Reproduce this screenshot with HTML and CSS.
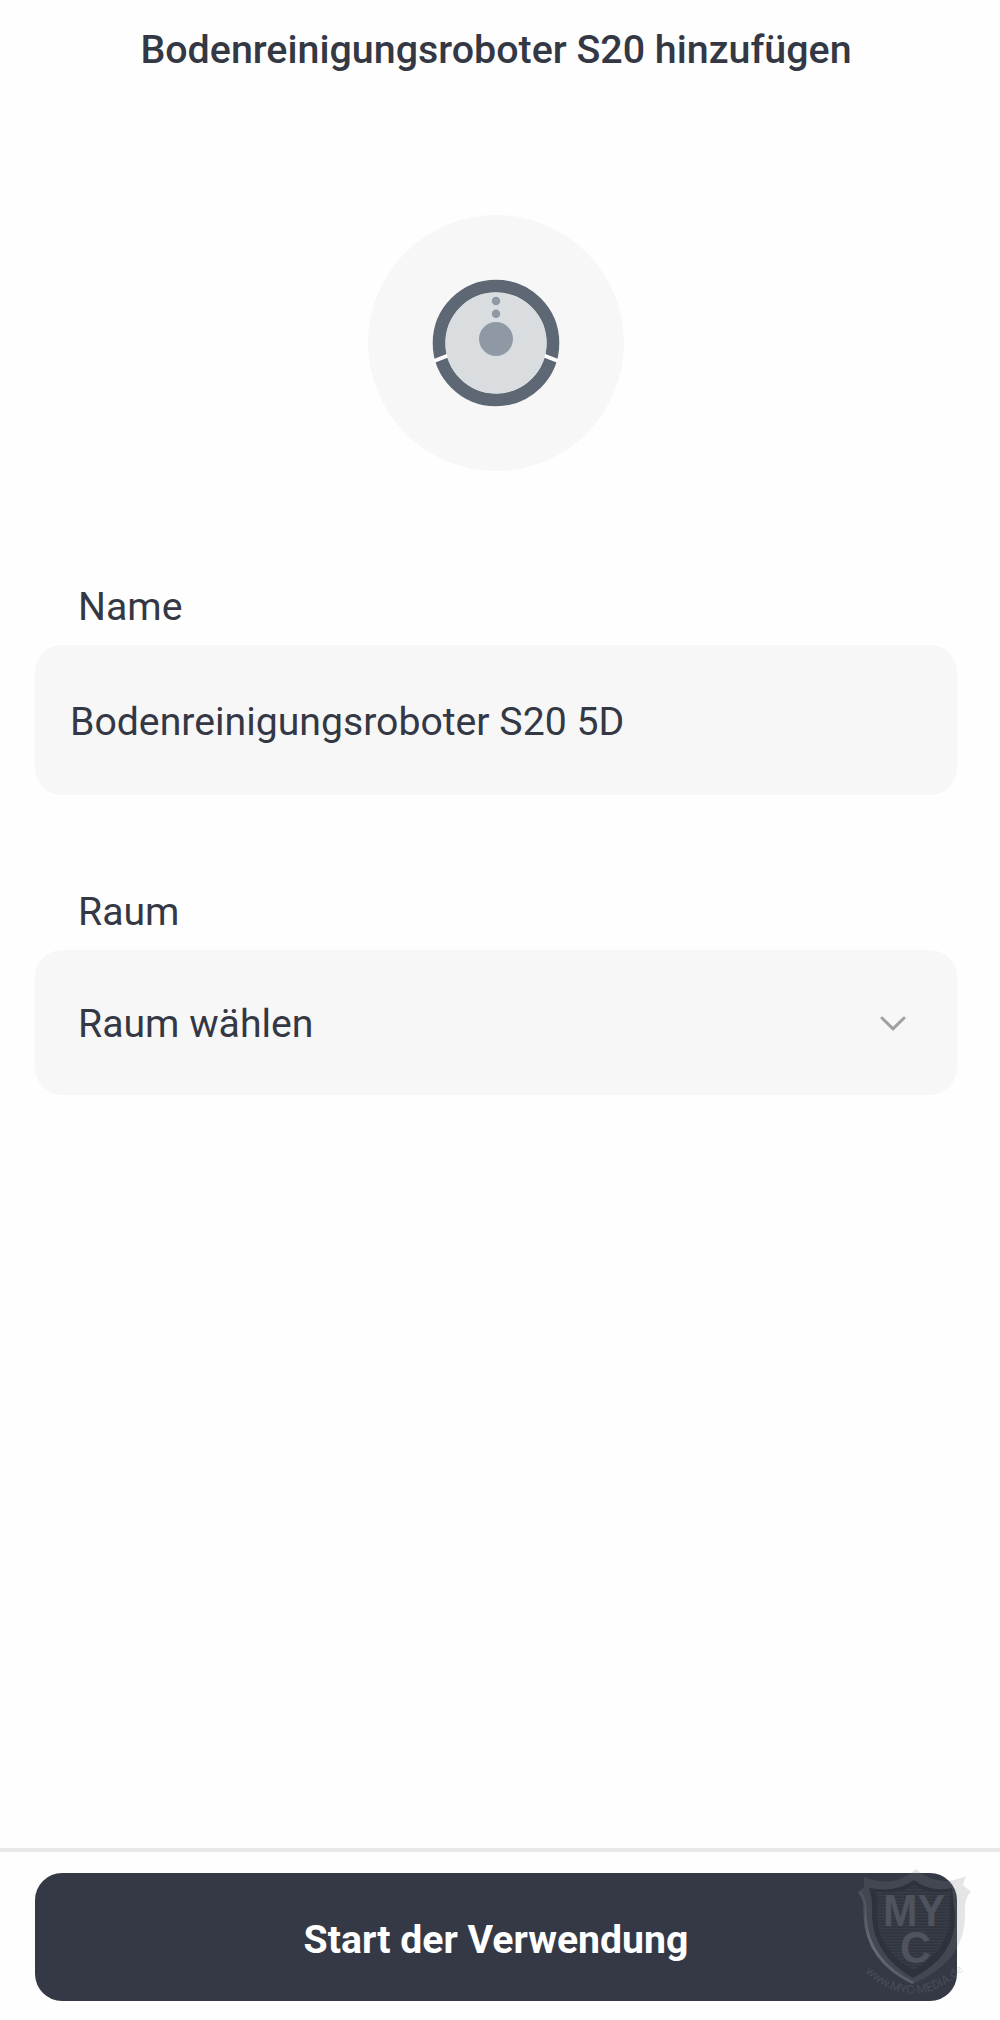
FILE: index.html
```html
<!DOCTYPE html>
<html lang="de">
<head>
    <meta charset="UTF-8">
    <meta name="viewport" content="width=device-width, initial-scale=1.0">
    <title>Bodenreinigungsroboter S20 hinzufügen</title>
    <link rel="stylesheet" href="styles.css">
</head>
<body>
    <div class="screen">
        <h1 class="page-title">Bodenreinigungsroboter S20 hinzufügen</h1>

        <div class="device-icon">
            <svg width="128" height="128" viewBox="0 0 128 128">
                <circle cx="64" cy="64" r="57" fill="#d9dde0" stroke="#5e6874" stroke-width="12.6"/>
                <path d="M2 82 L16 76.5 M126 82 L112 76.5" stroke="#fff" stroke-width="4"/>
                <circle cx="64" cy="64" r="50.5" fill="#d9dde0"/>
                <circle cx="64" cy="22" r="4.2" fill="#8f98a4"/>
                <circle cx="64" cy="34.7" r="4.2" fill="#8f98a4"/>
                <circle cx="64" cy="60" r="17" fill="#8f98a5"/>
            </svg>
        </div>

        <form class="device-form">
            <label class="field-label" for="deviceName">Name</label>
            <input class="field name-field" id="deviceName" type="text" value="Bodenreinigungsroboter S20 5D">

            <span class="field-label room-label">Raum</span>
            <button class="field room-field" type="button">
                <span>Raum wählen</span>
                <svg class="chevron" width="28" height="18" viewBox="0 0 28 18">
                    <path d="M3 3 L14 13.8 L25 3"/>
                </svg>
            </button>
        </form>

        <div class="footer">
            <button class="start-btn" type="button">Start der Verwendung</button>
            <svg class="watermark" width="120" height="140" viewBox="0 0 120 140">
                <defs>
                    <pattern id="mesh" width="3" height="3" patternUnits="userSpaceOnUse">
                        <rect width="3" height="3" fill="#313540"/>
                        <path d="M0 1.5 L1.5 0 L3 1.5" fill="none" stroke="#434852" stroke-width=".7"/>
                    </pattern>
                    <linearGradient id="edge" x1="0" y1="0" x2="0" y2="1">
                        <stop offset="0" stop-color="#8a8e96" stop-opacity=".15"/>
                        <stop offset=".6" stop-color="#8a8e96" stop-opacity=".55"/>
                        <stop offset="1" stop-color="#8a8e96" stop-opacity=".3"/>
                    </linearGradient>
                </defs>
                <path class="shield-rim" d="M9 12 Q40 24 61 4 Q83 24 111 11 L108 20 L116 27 Q109 32 110 51 Q110 96 58 119 Q12 96 10 51 Q11 34 3 27 L9 22 Z"/>
                <path class="shield-edge" d="M4 27 Q11 33 10 51 Q12 96 58 118"/>
                <path class="shield-shade" d="M14 23 Q42 28 59 15 Q76 28 97 23 L100 51 Q101 91 58 113 Q19 91 17 51 Q18 35 14 23 Z"/>
                <path class="shield-body" d="M20 26 Q43 31 59 20 Q75 31 96 26 Q94 33 95 51 Q94 86 58 105 Q24 86 22 51 Q23 34 20 26 Z"/>
                <text class="mark" x="28" y="61" textLength="62" lengthAdjust="spacingAndGlyphs">MY</text>
                <text class="mark" x="45" y="98" textLength="31" lengthAdjust="spacingAndGlyphs">C</text>
                <path id="arc" d="M10 107 Q58 151 108 106" fill="none"/>
                <text class="mark-url"><textPath href="#arc">www.MYC-MEDIA.de</textPath></text>
            </svg>
        </div>
    </div>
</body>
</html>
```
FILE: styles.css
```css
* {
    box-sizing: border-box;
}
body {
    margin: 0;
    background-color: #fefefe;
    color: #343844;
    font-family: Roboto, sans-serif;
    font-size: 39.2px;
}
.screen {
    height: 2020px;
    display: flex;
    flex-direction: column;
}
.page-title {
    margin: 27px 8px 0 0;
    font-size: 39.4px;
    line-height: 46px;
    font-weight: 500;
    text-align: center;
}
.device-icon {
    width: 256px;
    height: 256px;
    margin: 142px 0 0 368px;
    border-radius: 50%;
    background-color: #f7f7f7;
    display: flex;
    align-items: center;
    justify-content: center;
}
.device-form {
    display: flex;
    flex-direction: column;
    padding: 113px 43px 0 35px;
}
.field-label {
    padding-left: 43px;
    line-height: 46px;
    margin-bottom: 15px;
}
.field {
    width: 100%;
    border: none;
    border-radius: 27px;
    background-color: #f7f7f7;
    color: inherit;
    font: inherit;
    outline: none;
}
.name-field {
    height: 150px;
    padding: 4px 35px 0;
}
.room-label {
    margin-top: 94px;
}
.room-field {
    height: 145px;
    padding: 3px 50px 0 43px;
    display: flex;
    align-items: center;
    justify-content: space-between;
}
.chevron path {
    fill: none;
    stroke: #a0a0a0;
    stroke-width: 3;
    stroke-linecap: round;
}
.footer {
    position: relative;
    height: 172px;
    margin-top: auto;
    padding: 21px 43px 0 35px;
    border-top: 4px solid #e9e9e9;
}
.start-btn {
    width: 100%;
    height: 128px;
    padding-top: 6px;
    border: none;
    border-radius: 27px;
    background-color: #353945;
    color: #fff;
    font: inherit;
    font-weight: 700;
}

/* shield overlapping the button corner */
.watermark {
    position: absolute;
    left: 855px;
    top: 13px;
}
.shield-rim {
    fill: rgba(125, 128, 134, 0.2);
}
.shield-edge {
    fill: none;
    stroke: url(#edge);
    stroke-width: 3;
}
.shield-shade {
    fill: #2e323d;
}
.shield-body {
    fill: url(#mesh);
}
.mark {
    font-family: "Liberation Sans", sans-serif;
    font-weight: 700;
    font-size: 45px;
    fill: #4f535d;
}
.mark-url {
    font-size: 12px;
    fill: #8a8e96;
    opacity: 0.22;
}
```
